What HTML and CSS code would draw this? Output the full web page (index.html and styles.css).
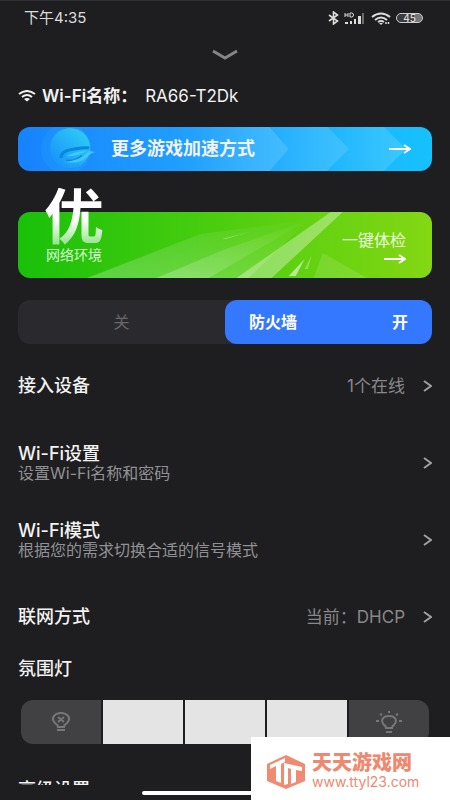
FILE: index.html
```html
<!DOCTYPE html>
<html lang="zh-CN">
<head>
<meta charset="utf-8">
<meta name="viewport" content="width=device-width, initial-scale=1">
<title>路由器</title>
<link rel="stylesheet" href="styles.css">
</head>
<body>
<header class="status">
  <span class="time">下午4:35</span>
  <div class="status-icons">
    <svg width="11" height="14" viewBox="0 0 11 14" fill="none" stroke="currentColor" stroke-width="1.6"><path d="M1 4l8.500 6L5.500 13V1l4 3L1 10"/></svg>
    <svg width="22" height="13" viewBox="0 0 22 13" fill="currentColor"><path d="M1 10h3v2H1zM6 9h2v3H6zM10 7h2v5h-2zM14 4h3v8h-3z"/><path d="M18 1h2v11h-2z" opacity=".4"/><path d="M1 1v4M4 1v4M1 3h3M6 1v4h1.500q2 0 2-2t-2-2z" fill="none" stroke="currentColor"/></svg>
    <svg width="20" height="13" viewBox="0 0 20 13" fill="none" stroke="currentColor" stroke-width="2"><path d="M1 5q9-7 18 0M4 8q6-5 12 0M7 10q3-2 6 0"/><path d="M8 11h4l-2 2z" fill="currentColor" stroke="none"/><path d="M15 10v2M17.500 10v2" stroke-width="1.500"/></svg>
    <span class="battery">45</span>
  </div>
</header>
<main>
  <button class="collapse" aria-label="收起"><svg width="26" height="12" viewBox="0 0 26 12" fill="none" stroke="currentColor" stroke-width="3"><path d="M1 2l12 7 12-7"/></svg></button>
  <h1 class="network">
    <svg width="18" height="12" viewBox="0 0 18 12" fill="none" stroke="currentColor" stroke-width="2"><path d="M1 4q8-6 16 0M4 7q5-4 10 0"/><path d="M6 9q3-2 6 0l-3 2.500z" fill="currentColor" stroke="none"/></svg>
    <span>Wi-Fi名称：</span><span class="ssid">RA66-T2Dk</span>
  </h1>
  <a class="boost" href="#boost">
    <svg class="art" viewBox="0 0 413 44" preserveAspectRatio="none" aria-hidden="true">
      <defs>
        <linearGradient id="chev"><stop offset="0" stop-color="#fff" stop-opacity="0"/><stop offset="1" stop-color="#fff" stop-opacity=".16"/></linearGradient>
        <linearGradient id="orb" x1="1" y1="0" x2="0" y2="1"><stop stop-color="#31d3f5"/><stop offset="1" stop-color="#168cfa"/></linearGradient>
      </defs>
      <path d="M170 0h81l19 22-19 22h-81z" fill="url(#chev)"/>
      <path d="M251 0h58l21 22-22 22h-57l19-22z" fill="url(#chev)"/>
      <path d="M309 0h56l22 22-22 22h-57l22-22z" fill="url(#chev)"/>
      <circle cx="48" cy="22" r="25" fill="#2cc8ff" opacity=".14"/>
      <circle cx="52" cy="21" r="20" fill="url(#orb)"/>
      <path d="M43 31q-1-7 13-9 12-2 15-1M48 34q10 1 16-5" fill="none" stroke="#0787df" stroke-width="3"/>
      <path d="M45 35q17-1 26-11l6 1q-6 2-8 5-8 8-24 5zM48 29q10-5 20-5-8 6-20 5z" fill="#41c8fa"/>
    </svg>
    <span class="boost-text">更多游戏加速方式</span>
    <svg class="arrow" width="22" height="10" viewBox="0 0 22 10"><path d="M0 5h20M15 1l6 4-6 4"/></svg>
  </a>
  <a class="health" href="#check">
    <svg class="art" viewBox="0 0 413 66" preserveAspectRatio="none" aria-hidden="true">
      <defs><linearGradient id="ray" x1="0" y1="1" x2="1" y2="0"><stop stop-color="#fff" stop-opacity=".25"/><stop offset="1" stop-color="#fff" stop-opacity="0"/></linearGradient></defs>
      <path d="M69 66L182 22 290 8 190 66z" fill="url(#ray)"/>
      <path d="M138 66L205 38 290 8 230 66z" fill="url(#ray)"/>
      <path d="M218 66L312 0h12L253 66z" fill="#fff" opacity=".34"/>
      <path d="M204 27l30-8-27 8z" fill="#fff" opacity=".4"/>
      <path d="M270 64l16-17-9 17z" fill="#fff" opacity=".55"/>
      <path d="M286 57l7-14-4 14z" fill="#fff" opacity=".3"/>
      <path d="M295 66l9-25 44 25z" fill="#fff" opacity=".12"/>
    </svg>
    <span class="score"><strong>优</strong><span>网络环境</span></span>
    <span class="check">一键体检<svg class="arrow" width="22" height="10" viewBox="0 0 22 10"><path d="M0 5h20M15 1l6 4-6 4"/></svg></span>
  </a>
  <div class="toggle" role="group" aria-label="防火墙">
    <button class="off">关</button>
    <button class="on" aria-pressed="true"><span>防火墙</span><span>开</span></button>
  </div>
  <nav class="rows">
    <a class="row" href="#devices"><span class="title">接入设备</span><span class="value">1个在线</span><svg class="go" width="9" height="12" viewBox="0 0 9 12"><path d="M1 1l7 5-7 5"/></svg></a>
    <a class="row" href="#wifi"><span class="title">Wi-Fi设置<small>设置Wi-Fi名称和密码</small></span><svg class="go" width="9" height="12" viewBox="0 0 9 12"><path d="M1 1l7 5-7 5"/></svg></a>
    <a class="row" href="#mode"><span class="title">Wi-Fi模式<small>根据您的需求切换合适的信号模式</small></span><svg class="go" width="9" height="12" viewBox="0 0 9 12"><path d="M1 1l7 5-7 5"/></svg></a>
    <a class="row" href="#wan"><span class="title">联网方式</span><span class="value">当前：DHCP</span><svg class="go" width="9" height="12" viewBox="0 0 9 12"><path d="M1 1l7 5-7 5"/></svg></a>
  </nav>
  <h2 class="section">氛围灯</h2>
  <div class="light" role="group" aria-label="氛围灯">
    <button aria-label="关灯"><svg width="20" height="20" viewBox="0 0 20 20" fill="none" stroke="currentColor" stroke-width="2"><path d="M7 15q0-2-3-4C-1 6 4 1 10 1s11 5 6 10q-3 2-3 4zM6 18h8M7 5l6 5M13 5l-6 5"/></svg></button>
    <button class="lit" aria-label="亮度 1"></button>
    <button class="lit" aria-label="亮度 2"></button>
    <button class="lit" aria-label="亮度 3"></button>
    <button aria-label="最亮"><svg width="28" height="22" viewBox="0 0 28 22" fill="none" stroke="currentColor" stroke-width="2"><path d="M11 17q0-2-2-3c-4-5-1-9 5-9s9 4 5 9q-2 1-2 3zM11 21h6M14 0v2M5 3l2 1M23 3l-2 1M1 10h3M24 10h3"/></svg></button>
  </div>
  <h2 class="section next">高级设置</h2>
</main>
<footer class="home"><span></span></footer>
<a class="brand" href="#site">
  <svg width="40" height="36" viewBox="0 0 40 36"><path d="M20 1l19 9v17l-19 8L1 27V10z" fill="#f08a72"/><path d="M4 11l15-7v4l-4 2v19l-5-2V12l-6 3zM18 9l18 4v4l-6-1v12l-5 2V15l-3-1v16l-4 1z" fill="#fff"/></svg>
  <span class="brand-text"><strong>天天游戏网</strong><span>www.ttyl23.com</span></span>
</a>
</body>
</html>
```
FILE: styles.css
```css
* { box-sizing: border-box; }
body {
  position: relative;
  display: flex;
  flex-direction: column;
  height: 100vh;
  margin: 0;
  overflow: hidden;
  border-top: 1px solid #303134;
  background: #1e1e20;
  color: #f2f2f2;
  font-family: Inter, "Noto Sans CJK SC", sans-serif;
  font-size: 16px;
  line-height: 20px;
}
a { color: inherit; text-decoration: none; }
button { padding: 0; border: 0; background: none; color: inherit; font: inherit; }
svg { display: block; flex: none; }
h1, h2 { margin: 0; font-size: 18px; font-weight: 500; }

.status {
  display: flex;
  justify-content: space-between;
  align-items: center;
  height: 34px;
  padding: 0 27px 0 24px;
  color: #dcdcdc;
  font-size: 15px;
}
.status-icons { display: flex; align-items: center; gap: 5px; }
.battery {
  width: 27px;
  height: 10px;
  border: 1px solid #cfcfcf;
  border-radius: 5px;
  background: linear-gradient(90deg, #3c3c3e 70%, #77777a 70%);
  font-size: 10px;
  font-weight: 500;
  line-height: 8px;
  text-align: center;
}

main { flex: 1; min-height: 0; overflow: hidden; padding: 0 18px; }
.collapse { display: block; margin: 14px auto 0; color: #858587; }
.network {
  display: flex;
  align-items: center;
  height: 24px;
  margin-top: 23px;
  font-size: 17px;
  font-weight: 600;
}
.network svg { margin-right: 6px; }
.ssid { margin-left: 8px; font-weight: 400; }

.art { position: absolute; inset: 0; width: 100%; height: 100%; border-radius: 12px; }
.arrow { fill: none; stroke: #fff; stroke-width: 2; }
.boost {
  position: relative;
  display: flex;
  align-items: center;
  justify-content: space-between;
  height: 44px;
  margin-top: 19px;
  padding: 0 21px 0 93px;
  border-radius: 12px;
  background: linear-gradient(90deg, #1782ff, #23aaff 55%, #16c1fd);
  font-size: 18px;
  font-weight: 700;
}
.boost-text, .boost .arrow { position: relative; }

.health {
  position: relative;
  display: flex;
  justify-content: space-between;
  align-items: flex-end;
  height: 66px;
  margin-top: 41px;
  padding: 0 26px 14px;
  border-radius: 12px;
  background: linear-gradient(90deg, #19c009, #4dce10 50%, #84d713);
}
.score {
  position: relative;
  display: flex;
  flex-direction: column;
  align-items: center;
  font-size: 14px;
  line-height: 18px;
  color: #d9f8d3;
}
.score strong {
  background: linear-gradient(#fff 55%, #8de183);
  background-clip: text;
  color: transparent;
  font-size: 60px;
  font-weight: 700;
  line-height: 58px;
}
.check { position: relative; display: flex; flex-direction: column; align-items: flex-end; gap: 4px; color: #eaffdb; }

.toggle {
  display: grid;
  grid-template-columns: 1fr 1fr;
  height: 44px;
  margin-top: 22px;
  border-radius: 12px;
  background: #2a2a2e;
}
.off { color: #67676a; }
.on {
  display: flex;
  align-items: center;
  justify-content: space-between;
  padding: 0 24px;
  border-radius: 12px;
  background: #3478ff;
  color: #fff;
  font-weight: 700;
}

.rows { margin-top: 3px; }
.row { display: flex; align-items: center; height: 77px; }
.title { flex: 1; font-size: 18px; font-weight: 500; }
.title small { display: block; color: #919193; font-size: 16px; font-weight: 400; line-height: 18px; }
.value { color: #88888a; font-size: 17px; }
.go { margin-left: 18px; fill: none; stroke: #a0a0a2; stroke-width: 2; }

.section { margin-top: 2px; line-height: 24px; }
.light {
  display: grid;
  grid-template-columns: repeat(5, 1fr);
  gap: 2px;
  height: 44px;
  margin: 19px 3px 0;
  overflow: hidden;
  border-radius: 12px;
}
.light button { display: grid; place-items: center; background: #414143; color: #77777a; }
.light .lit { background: #e4e4e4; }
.next { margin-top: 34px; }

.home { display: flex; justify-content: center; height: 15px; padding-top: 6px; }
.home span { width: 37%; height: 4px; border-radius: 2px; background: #fff; }

.brand {
  position: absolute;
  right: 0;
  bottom: 0;
  display: flex;
  align-items: center;
  gap: 6px;
  width: 199px;
  height: 63px;
  padding: 6px 0 0 15px;
  background: #fff;
  color: #ef8870;
}
.brand-text { display: flex; flex-direction: column; font-size: 14px; line-height: 18px; }
.brand-text strong { font-size: 20px; font-weight: 900; line-height: 20px; }
```
